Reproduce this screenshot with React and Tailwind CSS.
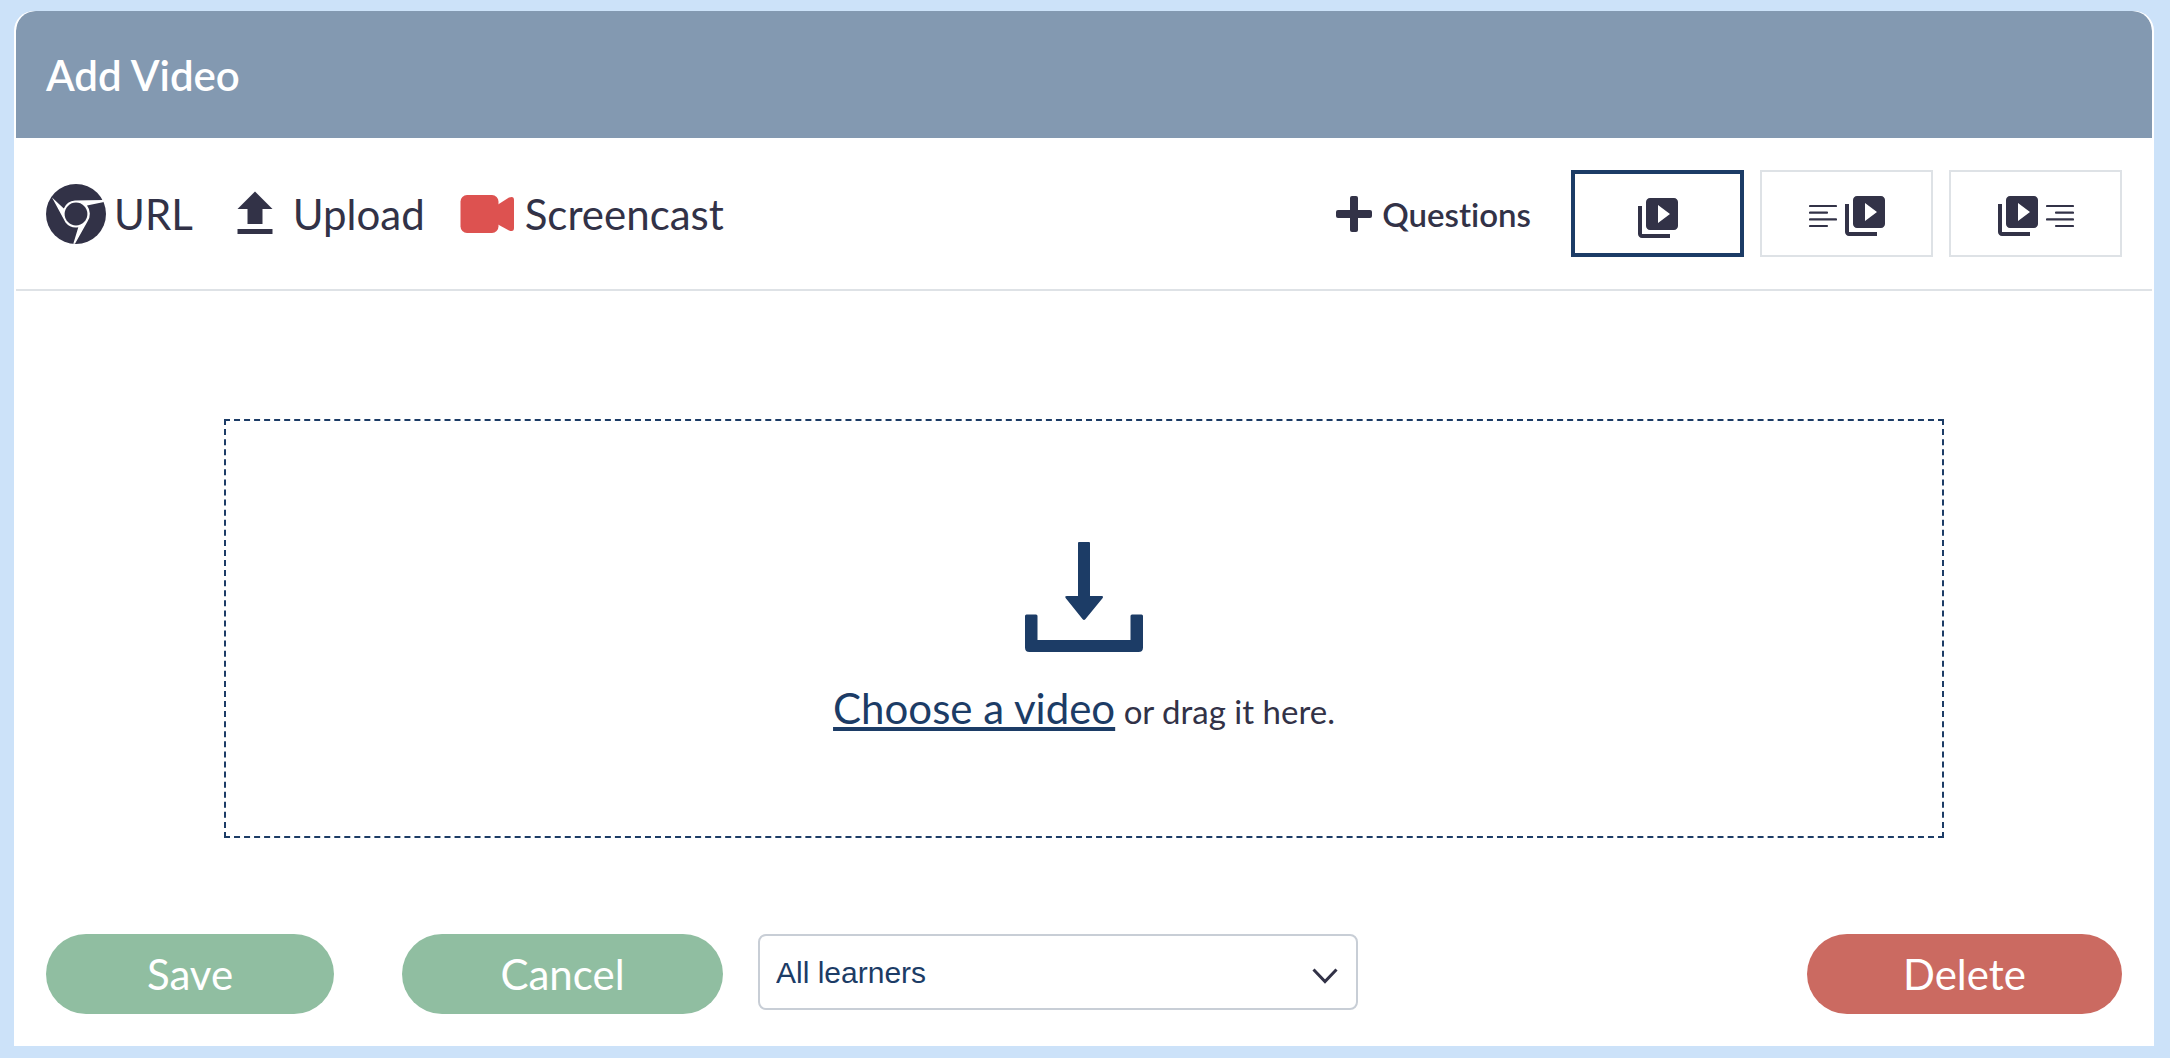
import { useRef, useState } from 'react'
import { MdFileUpload, MdVideoLibrary } from 'react-icons/md'

const LAYOUTS = [
  { id: 'video', label: 'Video only' },
  { id: 'text-left', label: 'Text left of video' },
  { id: 'text-right', label: 'Text right of video' },
]

function ChromeIcon() {
  return (
    <svg className="size-[60px]" viewBox="0 0 60 60" aria-hidden="true">
      <circle cx="30" cy="30" r="30" fill="#323247" />
      <path
        d="M6 13.500 17.800 24.500A13.500 13.500 0 0 1 29 16.600L57 16 58 18 41 21.600A13.500 13.500 0 0 1 41.500 37.500L29 59.800H27.300L32.300 43.300A13.500 13.500 0 0 1 19.500 38.500Z"
        fill="#fff"
      />
      <circle cx="30" cy="30" r="11.400" fill="#323247" />
    </svg>
  )
}

function CameraIcon() {
  return (
    <svg className="size-[60px]" viewBox="0 0 60 60" fill="#dd5250" aria-hidden="true">
      <rect x="3.5" y="11" width="38" height="38" rx="6.5" />
      <path d="M41 20.500 52 13.600Q57 11.500 57 16V44Q57 48.500 52 46.400L41 40.500Z" />
    </svg>
  )
}

function PlusIcon() {
  return (
    <svg className="size-9" viewBox="0 0 36 36" fill="#323247" aria-hidden="true">
      <rect x="14" y="0" width="8" height="36" rx="2" />
      <rect x="0" y="14" width="36" height="8" rx="2" />
    </svg>
  )
}

function LinesIcon({ flip }) {
  return (
    <svg
      className="h-6 w-7"
      viewBox="0 0 28 24"
      fill="none"
      stroke="#323247"
      strokeWidth="2.2"
      strokeLinecap="round"
      aria-hidden="true"
    >
      {flip ? (
        <path d="M1 2h26M10 8.7h17M1 15.4h26M10 22h17" />
      ) : (
        <path d="M1 2h26M1 8.7h17M1 15.4h26M1 22h17" />
      )}
    </svg>
  )
}

function DropIcon() {
  return (
    <svg className="h-[110px] w-[118px]" viewBox="0 0 118 110" fill="#1c3c66" aria-hidden="true">
      <path d="M54 0h10q1 0 1 1v53h11.500q2.500 0 1 2.300L60.300 77.300q-1.300 1.600-2.600 0L40.800 56.300q-1.500-2.300 1-2.300H53V1q0-1 1-1z" />
      <path d="M1.500 72.500h9.500q1.500 0 1.500 1.500V98h93V74q0-1.500 1.500-1.500h9.500q1.500 0 1.500 1.500v31.500q0 4.500-4.500 4.500H4.500Q0 110 0 105.500V74q0-1.500 1.500-1.500z" />
    </svg>
  )
}

function ToolButton({ icon, children }) {
  return (
    <button type="button" className="flex items-center gap-2 text-[42px] leading-[60px]">
      {icon}
      {children}
    </button>
  )
}

function LayoutButton({ layout, selected, onSelect }) {
  return (
    <button
      type="button"
      aria-label={layout.label}
      aria-pressed={selected}
      onClick={onSelect}
      className={`flex h-[87px] w-[173px] items-center justify-center gap-2 bg-white ${
        selected ? 'border-4 border-[#1c3c66] pt-2' : 'border-2 border-[#dee2e6] pt-1'
      }`}
    >
      {layout.id === 'text-left' && <LinesIcon />}
      <MdVideoLibrary viewBox="2 2 20 20" className="size-10" />
      {layout.id === 'text-right' && <LinesIcon flip />}
    </button>
  )
}

export default function App() {
  const [layout, setLayout] = useState('video')
  const fileInput = useRef(null)

  return (
    <div className="min-h-screen bg-[#cce2f9] pt-[11px] pr-4 pb-3 pl-[14px] font-['Lato',sans-serif] text-[#323247] [font-variant-ligatures:none]">
      <section className="overflow-hidden rounded-t-[20px] border-x-2 border-white bg-white">
        <header className="flex h-[127px] items-center rounded-t-[20px] bg-[#8399b1] px-[30px]">
          <h1 className="text-[42px] leading-[60px] font-semibold text-white">Add Video</h1>
        </header>

        {/* Toolbar */}
        <div className="flex items-center justify-between border-b-2 border-[#dee2e6] px-[30px] py-8">
          <div className="flex items-center gap-8">
            <ToolButton icon={<ChromeIcon />}>URL</ToolButton>
            <ToolButton icon={<MdFileUpload className="size-[60px]" />}>Upload</ToolButton>
            <ToolButton icon={<CameraIcon />}>Screencast</ToolButton>
          </div>

          <div className="flex items-center gap-4">
            <button type="button" className="mr-6 flex items-center gap-2.5 text-[33px] leading-[48px] font-semibold">
              <PlusIcon />
              Questions
            </button>
            {LAYOUTS.map(l => (
              <LayoutButton
                key={l.id}
                layout={l}
                selected={layout === l.id}
                onSelect={() => setLayout(l.id)}
              />
            ))}
          </div>
        </div>

        {/* Drop zone */}
        <div className="mx-52 mt-32 mb-24 flex flex-col items-center border-2 border-dashed border-[#1c3c66] pt-[121px] pb-[95px]">
          <DropIcon />
          <p className="mt-[26px] text-[33px] leading-[60px]">
            <button
              type="button"
              onClick={() => fileInput.current.click()}
              className="text-[42px] text-[#1c3c66] underline decoration-4 underline-offset-[3px] [text-decoration-skip-ink:none]"
            >
              Choose a video
            </button>{' '}
            or drag it here.
          </p>
          <input ref={fileInput} type="file" accept="video/*" aria-label="Video file" className="hidden" />
        </div>

        {/* Actions */}
        <footer className="flex items-start px-[30px] pb-8">
          <button type="button" className="h-20 w-72 rounded-full bg-[#90bea1] text-[42px] text-white">
            Save
          </button>
          <button type="button" className="ml-[68px] h-20 w-[321px] rounded-full bg-[#90bea1] text-[42px] text-white">
            Cancel
          </button>
          <div className="relative ml-[35px] w-[600px]">
            <select
              aria-label="Learners"
              className="h-[76px] w-full appearance-none rounded-lg border-2 border-[#c8ced6] bg-white px-4 font-['Liberation_Sans',sans-serif] text-[30px] text-[#1c3c66]"
            >
              <option>All learners</option>
            </select>
            <svg
              className="pointer-events-none absolute top-[34px] right-5 h-4 w-[26px]"
              viewBox="0 0 26 16"
              fill="none"
              stroke="#323247"
              strokeWidth="3"
              aria-hidden="true"
            >
              <path d="M1.500 1.500 13 13.500 24.500 1.500" />
            </svg>
          </div>
          <button type="button" className="ml-auto h-20 w-[315px] rounded-full bg-[#cb6a61] text-[42px] text-white">
            Delete
          </button>
        </footer>
      </section>
    </div>
  )
}
